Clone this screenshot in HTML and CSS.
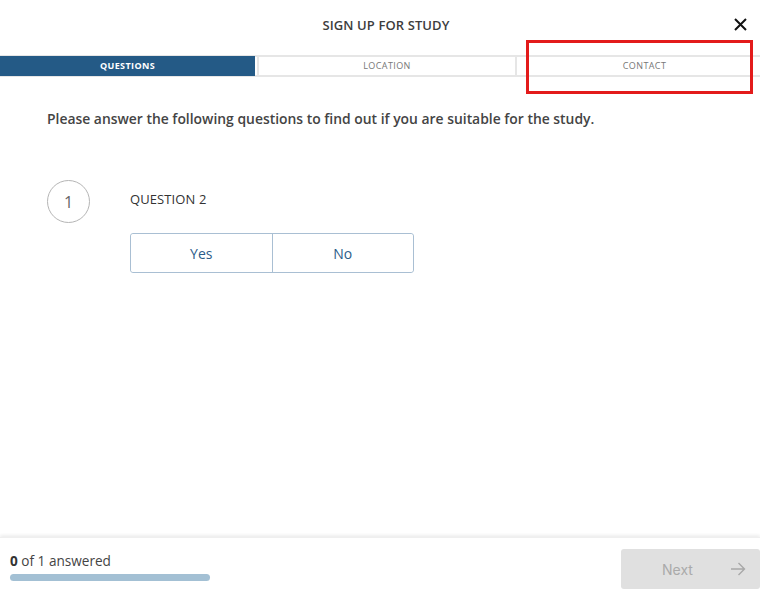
FILE: index.html
```html
<!DOCTYPE html>
<html lang="en">
<head>
<meta charset="utf-8">
<title>Sign up for study</title>
<link rel="stylesheet" href="styles.css">
</head>
<body>
<div class="page">
  <header class="header">
    <div class="title-row">
      <h1 class="title">SIGN UP FOR STUDY</h1>
      <button class="close" aria-label="Close">
        <svg width="13" height="13" viewBox="0 0 13 13"><path d="M1 1L12 12M12 1L1 12" stroke="#111" stroke-width="2" fill="none"/></svg>
      </button>
    </div>
    <nav class="tabs">
      <div class="tab tab-active">QUESTIONS</div>
      <div class="tab">LOCATION</div>
      <div class="tab">CONTACT</div>
    </nav>
    <div class="highlight"></div>
  </header>
  <main class="main">
    <p class="intro">Please answer the following questions to find out if you are suitable for the study.</p>
    <div class="question">
      <div class="num">1</div>
      <div class="q-body">
        <div class="q-label">QUESTION 2</div>
        <div class="choices">
          <button class="choice">Yes</button>
          <button class="choice">No</button>
        </div>
      </div>
    </div>
  </main>
  <footer class="footer">
    <div class="progress">
      <div class="progress-text"><b>0</b> of 1 answered</div>
      <div class="bar"></div>
    </div>
    <button class="next">
      <span>Next</span>
      <svg width="16" height="14" viewBox="0 0 16 14"><path d="M1 7H14.5M8.5 1L14.5 7L8.5 13" stroke="#a8a8a8" stroke-width="1.4" fill="none"/></svg>
    </button>
  </footer>
</div>
</body>
</html>
```
FILE: styles.css
```css
* { box-sizing: border-box; }
html, body { margin: 0; padding: 0; }
body {
  width: 760px;
  height: 590px;
  overflow: hidden;
  background: #fff;
  font-family: "Open Sans", "Liberation Sans", sans-serif;
  color: #444;
}
.page {
  height: 590px;
  display: flex;
  flex-direction: column;
}
.header {
  position: relative;
  width: 772px;
}
.title-row {
  height: 55px;
  display: flex;
  align-items: center;
  justify-content: center;
  position: relative;
}
.title {
  margin: 0;
  font-size: 13px;
  font-weight: 600;
  color: #3d3d3d;
  letter-spacing: 0.1px;
  padding-bottom: 5px;
}
.close {
  position: absolute;
  left: 734px;
  top: 18px;
  border: 0;
  background: none;
  padding: 0;
  width: 14px;
  height: 14px;
  display: flex;
}
.tabs {
  display: grid;
  grid-template-columns: 257px 258px 257px;
  border-top: 2px solid #e6e6e6;
  border-bottom: 2px solid #e6e6e6;
  height: 22px;
}
.tab {
  display: flex;
  align-items: center;
  justify-content: center;
  font-size: 9px;
  letter-spacing: 0.4px;
  color: #777;
  border-left: 2px solid #e6e6e6;
  padding-bottom: 1px;
}
.tab:first-child { border-left: 0; }
.tab-active {
  background: #245a86;
  color: #fff;
  font-weight: 700;
  margin-top: -1px;
  margin-bottom: -1px;
  width: 255px;
}
.highlight {
  position: absolute;
  left: 526px;
  top: 40px;
  width: 227px;
  height: 54px;
  border: 3px solid #e31b1b;
}
.main {
  flex: 1;
  padding: 32px 0 0 47px;
}
.intro {
  margin: 0;
  font-size: 13.9px;
  font-weight: 600;
  color: #444;
  line-height: 20px;
}
.question {
  display: flex;
  margin-top: 51px;
}
.num {
  width: 43px;
  height: 43px;
  border: 1px solid #b5b5b5;
  border-radius: 50%;
  display: flex;
  align-items: center;
  justify-content: center;
  font-size: 16px;
  font-weight: 400;
  color: #666;
  flex: none;
}
.q-body {
  margin-left: 40px;
  padding-top: 10px;
}
.q-label {
  font-size: 13px;
  color: #333;
  line-height: 18px;
  letter-spacing: 0.1px;
}
.choices {
  display: flex;
  margin-top: 25px;
  border: 1px solid #a9bfd3;
  border-radius: 3px;
  width: 284px;
  height: 40px;
}
.choice {
  flex: 1;
  border: 0;
  background: #fff;
  font-family: inherit;
  font-size: 14px;
  color: #2c5d8a;
  padding: 0;
  border-radius: 3px;
}
.choice + .choice { border-left: 1px solid #a9bfd3; border-radius: 0 3px 3px 0; }
.footer {
  height: 53px;
  display: flex;
  justify-content: space-between;
  align-items: flex-start;
  box-shadow: 0 -2px 3px rgba(0,0,0,0.07);
  border-top: 1px solid #efefef;
  padding: 11px 0 0 10px;
}
.progress { padding-top: 4px; }
.progress-text {
  font-size: 13.6px;
  color: #444;
  line-height: 16px;
}
.progress-text b { font-weight: 700; color: #333; }
.bar {
  margin-top: 5px;
  width: 200px;
  height: 7px;
  background: #a3c0d4;
  border-radius: 4px;
}
.next {
  width: 139px;
  height: 40px;
  border: 0;
  border-radius: 3px;
  background: #e0e0e0;
  display: flex;
  align-items: center;
  padding: 0 14px 0 41px;
  justify-content: space-between;
  font-family: Inter, "Liberation Sans", sans-serif;
  font-size: 14px;
  color: #aaa;
}
```
